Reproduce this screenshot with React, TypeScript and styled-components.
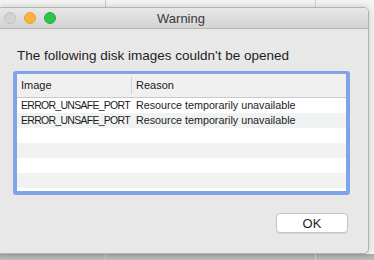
import React from 'react';
import styled, { createGlobalStyle } from 'styled-components';

interface Failure {
  image: string;
  reason: string;
}

const failures: Failure[] = [
  { image: 'ERROR_UNSAFE_PORT', reason: 'Resource temporarily unavailable' },
  { image: 'ERROR_UNSAFE_PORT', reason: 'Resource temporarily unavailable' },
];

const GlobalStyle = createGlobalStyle`
  html, body {
    margin: 0;
    padding: 0;
    overflow: hidden;
    background: #e4e4e4;
  }
  * {
    box-sizing: border-box;
  }
`;

const Desktop = styled.div`
  width: 374px;
  height: 260px;
  overflow: hidden;
  display: flex;
  background:
    linear-gradient(90deg, transparent 105px, #c9c9c9 105px, #c9c9c9 106px, transparent 106px),
    linear-gradient(90deg, transparent 315px, #d2d2d2 315px, #d2d2d2 316px, transparent 316px),
    linear-gradient(180deg, #f3f3f3 0, #f3f3f3 254px, #a9a9a9 254px, #bdbdbd 260px);
  font-family: 'Liberation Sans', Arial, sans-serif;
`;

const Window = styled.div`
  margin: 7px 0 0 -3px;
  width: 372px;
  height: 247px;
  display: flex;
  flex-direction: column;
  background: #e8e8e8;
  border: 1px solid #b3b3b3;
  border-radius: 5px;
  box-shadow: 0 0 6px rgba(0, 0, 0, 0.18);
  overflow: hidden;
`;

const TitleBar = styled.div`
  height: 21px;
  display: grid;
  grid-template-columns: 1fr auto 1fr;
  align-items: center;
  background: linear-gradient(180deg, #e7e7e7 0%, #d3d3d3 100%);
  border-bottom: 1px solid #b4b4b4;
  padding: 0 6px;
`;

const Lights = styled.div`
  display: flex;
  gap: 8px;
`;

const Light = styled.span<{ fill: string; edge: string }>`
  width: 12px;
  height: 12px;
  border-radius: 50%;
  background: ${p => p.fill};
  border: 1px solid ${p => p.edge};
`;

const Title = styled.div`
  font-size: 13px;
  color: #3a3a3a;
  margin-right: 4px;
`;

const Body = styled.div`
  flex: 1;
  display: flex;
  flex-direction: column;
  padding: 19px 18px 0 15px;
`;

const Message = styled.div`
  font-size: 13.5px;
  line-height: 16px;
  color: #1e1e1e;
  margin-left: 4px;
  margin-bottom: 7px;
`;

const TableBox = styled.div`
  height: 124px;
  border: 4px solid #80a3e9;
  border-top-width: 3px;
  border-radius: 3px;
  background: #ffffff;
  display: flex;
  flex-direction: column;
  overflow: hidden;
`;

const HeaderRow = styled.div`
  height: 24px;
  flex: none;
  display: grid;
  grid-template-columns: 114px 1fr;
  align-items: center;
  background: #f0f0f0;
  border-bottom: 1px solid #c9c9c9;
`;

const HeaderCell = styled.div<{ divider?: boolean }>`
  height: 17px;
  line-height: 17px;
  font-size: 11px;
  color: #222;
  padding-left: 4px;
  border-left: ${p => (p.divider ? '1px solid #d2d2d2' : 'none')};
`;

const Row = styled.div<{ striped: boolean }>`
  height: 15px;
  flex: none;
  display: grid;
  grid-template-columns: 114px 1fr;
  align-items: center;
  background: ${p => (p.striped ? '#f1f2f2' : '#ffffff')};
`;

const Cell = styled.div<{ tight?: boolean }>`
  font-size: ${p => (p.tight ? '10.5px' : '10.75px')};
  line-height: 15px;
  color: #1c1c1c;
  white-space: nowrap;
  overflow: hidden;
  padding-left: ${p => (p.tight ? '4px' : '5px')};
  letter-spacing: ${p => (p.tight ? '-0.72px' : '0')};
`;

const Footer = styled.div`
  display: flex;
  justify-content: flex-end;
  padding: 18px 2px 0 0;
`;

const OkButton = styled.button`
  width: 72px;
  height: 20px;
  padding: 0;
  background: #ffffff;
  border: 1px solid #c4c4c4;
  border-radius: 4px;
  box-shadow: 0 1px 1px rgba(0, 0, 0, 0.08);
  font-family: 'Liberation Sans', Arial, sans-serif;
  font-size: 13px;
  color: #1e1e1e;
`;

const App: React.FC = () => {
  const rows = Array.from({ length: 7 }, (_, i) => failures[i] ?? null);

  return (
    <Desktop>
      <GlobalStyle />
      <Window>
        <TitleBar>
          <Lights>
            <Light fill="#d3d3d3" edge="#c0c0c0" />
            <Light fill="#fcb23e" edge="#e5a136" />
            <Light fill="#2fc548" edge="#27ab3c" />
          </Lights>
          <Title>Warning</Title>
          <div />
        </TitleBar>
        <Body>
          <Message>The following disk images couldn't be opened</Message>
          <TableBox>
            <HeaderRow>
              <HeaderCell>Image</HeaderCell>
              <HeaderCell divider>Reason</HeaderCell>
            </HeaderRow>
            {rows.map((row, i) => (
              <Row key={i} striped={i % 2 === 1}>
                <Cell tight>{row?.image}</Cell>
                <Cell>{row?.reason}</Cell>
              </Row>
            ))}
          </TableBox>
          <Footer>
            <OkButton>OK</OkButton>
          </Footer>
        </Body>
      </Window>
    </Desktop>
  );
};

export default App;
